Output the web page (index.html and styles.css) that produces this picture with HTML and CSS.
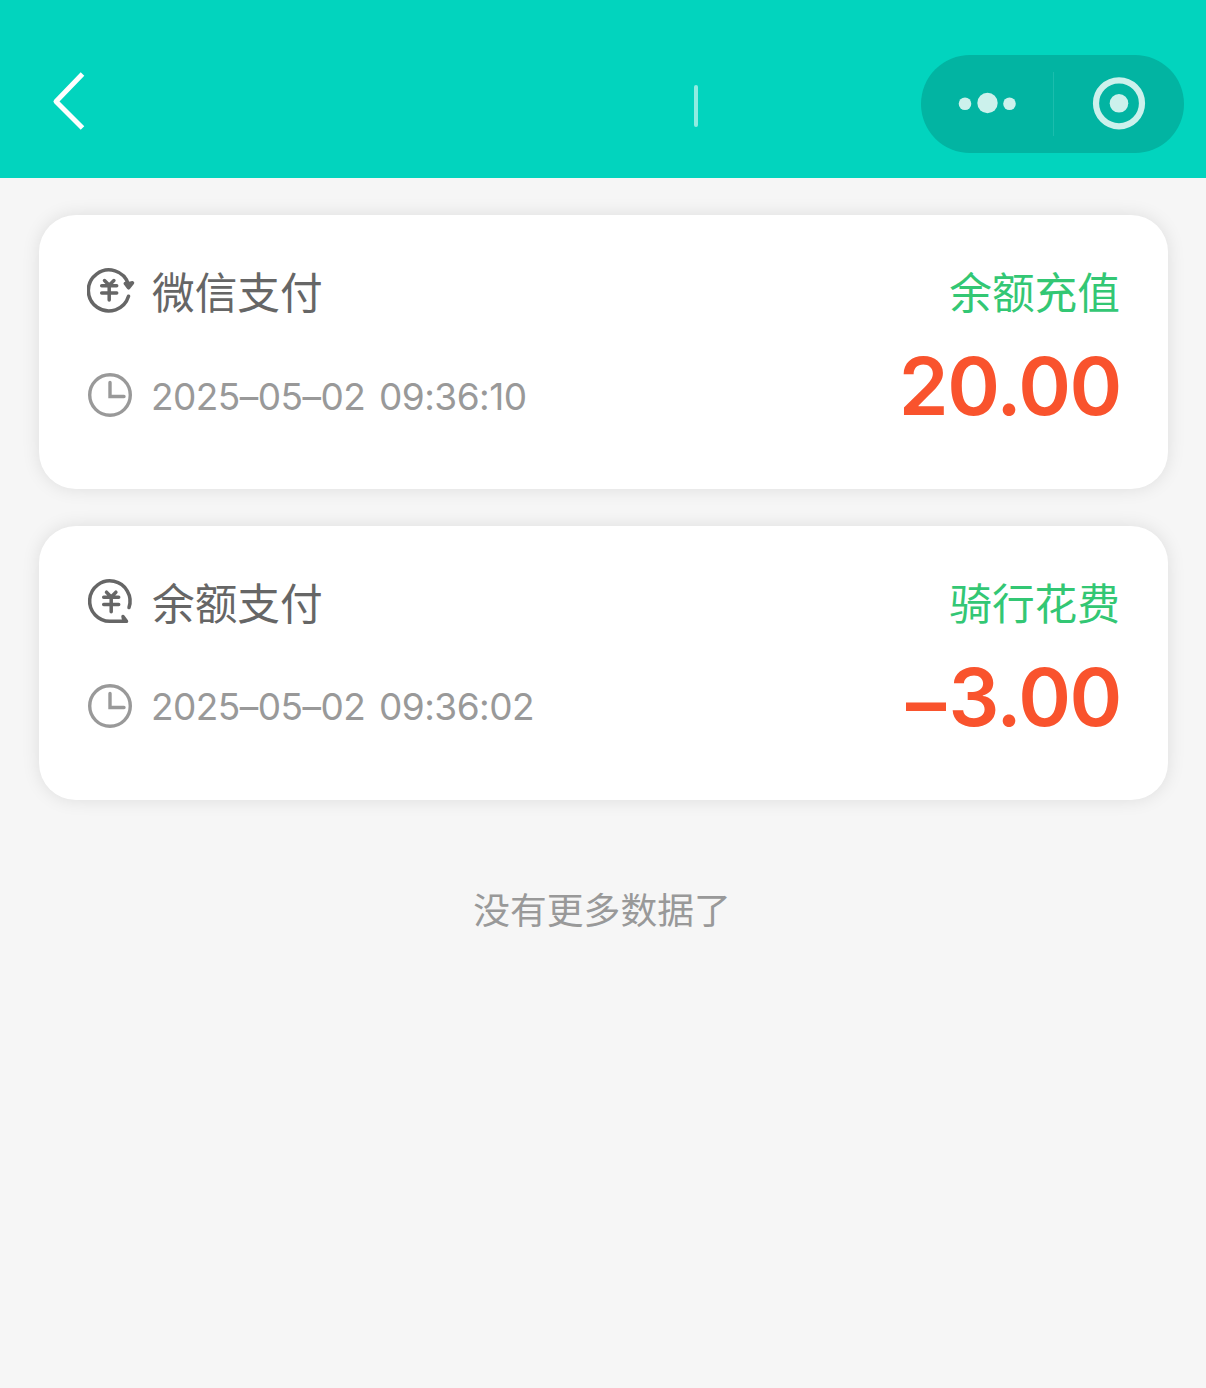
FILE: index.html
```html
<!DOCTYPE html>
<html lang="zh-CN">
<head>
<meta charset="utf-8">
<title>余额明细</title>
<link rel="stylesheet" href="styles.css">
</head>
<body>
<header class="navbar">
  <svg class="back" width="40" height="64" viewBox="0 0 40 64" fill="none" stroke="#fff" stroke-width="5" stroke-linejoin="round"><path d="M33.500 5 7 32.500 33.500 59"/></svg>
  <span class="title-mark"></span>
  <div class="capsule">
    <svg class="capsule-half" width="132" height="98" viewBox="0 0 132 98" fill="#ccf1ec"><circle cx="44" cy="48.700" r="6.300"/><circle cx="66.500" cy="48" r="10.200"/><circle cx="88.500" cy="48.700" r="6.300"/></svg>
    <span class="capsule-line"></span>
    <svg class="capsule-half" width="130" height="98" viewBox="0 0 130 98"><circle cx="65" cy="48.300" r="23" fill="none" stroke="#ccf1ec" stroke-width="6.200"/><circle cx="65" cy="48.300" r="9.300" fill="#ccf1ec"/></svg>
  </div>
</header>
<main class="list">
  <article class="card">
    <div class="details">
      <div class="row method">
        <svg class="icon" width="48" height="48" viewBox="0 1 48 48" fill="none" stroke="#666" stroke-width="3.500" stroke-linecap="round" stroke-linejoin="round"><path d="M41.500 31.300A20.500 20.500 0 1 1 41.300 19"/><path d="m38.300 18.500 3.200 4.300 4-5-4 1z" fill="#666"/><path d="m17.500 15.500 4.700 4.700 4.700-4.700M14.700 20.700h15M14.700 28h15M22.200 21v14"/></svg>
        <span class="label">微信支付</span>
      </div>
      <div class="row time">
        <svg class="icon" width="48" height="48" viewBox="0 0 48 48" fill="none" stroke="#999" stroke-width="3.400" stroke-linecap="round"><circle cx="23" cy="24" r="20.300"/><path d="M23 11.500v14h14"/></svg>
        <time>2025–05–02 09:36:10</time>
      </div>
    </div>
    <div class="summary">
      <span class="kind">余额充值</span>
      <span class="amount">20.00</span>
    </div>
  </article>
  <article class="card">
    <div class="details">
      <div class="row method">
        <svg class="icon" width="48" height="48" viewBox="0 0 48 48" fill="none" stroke="#666" stroke-width="3.500" stroke-linecap="round" stroke-linejoin="round"><path d="M42 30.500A20.200 20.200 0 1 0 23.500 44.300H39"/><path d="M36 39.500 39.500 44.300H37z" fill="#666"/><path d="m19.500 15.200 4.700 4.700 4.700-4.700M16.700 20.300h15M16.700 27.600h15M24.200 20.500v14.300"/></svg>
        <span class="label">余额支付</span>
      </div>
      <div class="row time">
        <svg class="icon" width="48" height="48" viewBox="0 0 48 48" fill="none" stroke="#999" stroke-width="3.400" stroke-linecap="round"><circle cx="23" cy="24" r="20.300"/><path d="M23 11.500v14h14"/></svg>
        <time>2025–05–02 09:36:02</time>
      </div>
    </div>
    <div class="summary">
      <span class="kind">骑行花费</span>
      <span class="amount"><span class="sign">–</span>3.00</span>
    </div>
  </article>
  <p class="end">没有更多数据了</p>
</main>
</body>
</html>
```
FILE: styles.css
```css
* { box-sizing: border-box; }
body {
  margin: 0;
  min-height: 1388px;
  background: #f6f6f6;
  font-family: Inter, "Noto Sans CJK SC", sans-serif;
  font-feature-settings: "calt" 0;
}
svg { display: block; flex: none; }
.navbar {
  height: 178px;
  padding: 55px 22px 25px 49px;
  display: flex;
  justify-content: space-between;
  background: #02d4be;
}
.back { margin-top: 14px; }
.title-mark {
  width: 4px;
  height: 42px;
  margin: 30px 0 0 382px;
  border-radius: 2px;
  background: #8fece1;
}
.capsule {
  width: 263px;
  height: 98px;
  border-radius: 49px;
  display: flex;
  align-items: center;
  background: #02b4a2;
}
.capsule-line {
  width: 1px;
  height: 64px;
  background: #1bbdad;
}
.list {
  padding: 37px 38px 0 39px;
  display: flex;
  flex-direction: column;
  gap: 36.600px;
}
.card {
  height: 274px;
  padding: 48px;
  border-radius: 37px;
  display: flex;
  justify-content: space-between;
  background: #fff;
  box-shadow: 0 0 18px rgba(0, 0, 0, 0.1);
}
.details {
  display: flex;
  flex-direction: column;
  gap: 45px;
}
.row {
  height: 58px;
  display: flex;
  align-items: center;
  gap: 17px;
  white-space: nowrap;
}
.method {
  align-items: flex-start;
  color: #666;
  font-size: 42.700px;
  line-height: 58px;
}
.method .icon { margin-top: 3px; }
.label { margin-top: 2px; }
.time {
  color: #999;
  font-size: 37px;
  letter-spacing: -0.550px;
  word-spacing: 4px;
}
.time time { margin: 2px 0 0 -1px; }
.summary {
  display: flex;
  flex-direction: column;
  align-items: flex-end;
}
.kind {
  margin-top: 2px;
  color: #33c774;
  font-size: 42.700px;
  line-height: 58px;
}
.amount {
  margin: 15px -1px 0 0;
  color: #f9532d;
  font-size: 80px;
  font-weight: 600;
  letter-spacing: -1.400px;
  line-height: 96px;
}
.sign {
  display: inline-block;
  margin-right: 4px;
  transform: translateY(5px);
}
.end {
  margin: 48px 3px 0 0;
  color: #999;
  font-size: 36.800px;
  line-height: 54px;
  text-align: center;
}
```
